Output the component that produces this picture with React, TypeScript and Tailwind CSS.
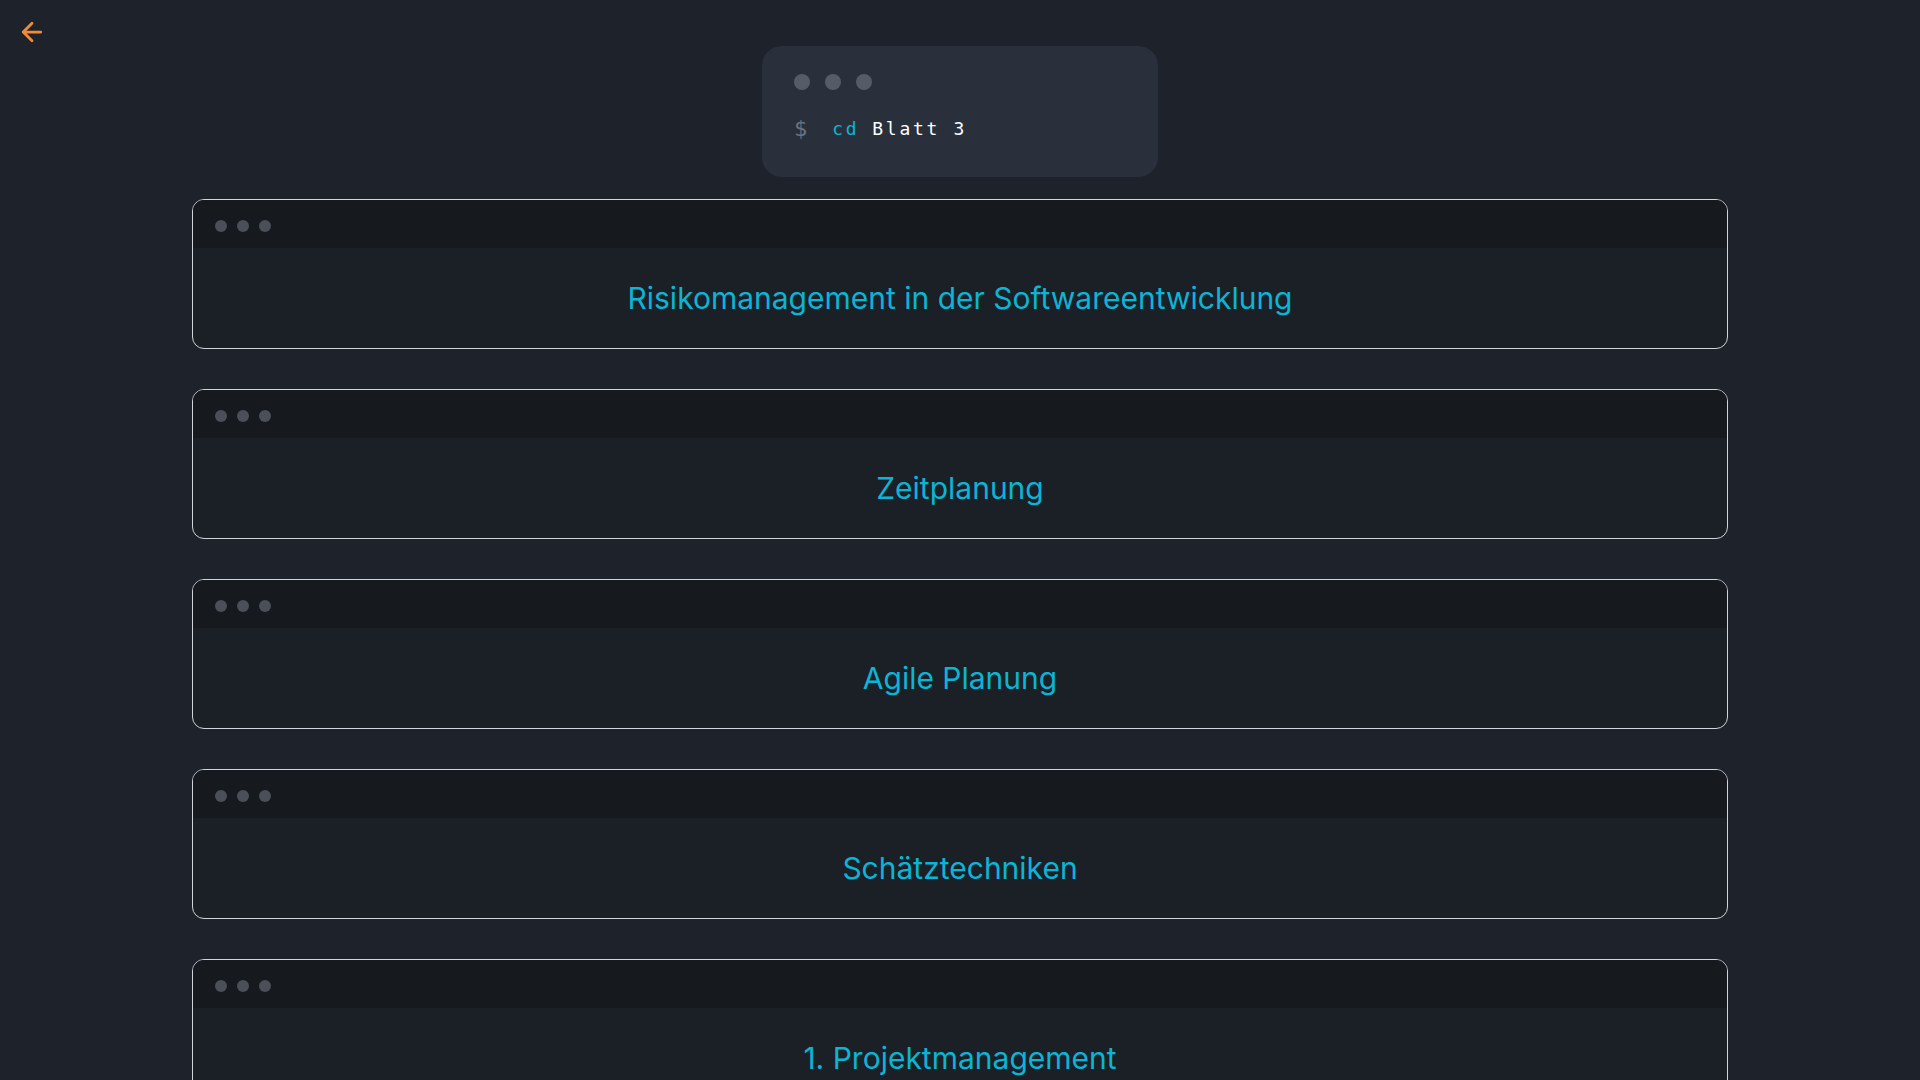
import React from "react";
import { ArrowLeft } from "lucide-react";

const topics = [
  "Risikomanagement in der Softwareentwicklung",
  "Zeitplanung",
  "Agile Planung",
  "Schätztechniken",
  "1. Projektmanagement",
  "2. Anforderungsanalyse",
  "3. Softwarearchitektur",
  "4. Qualitätssicherung",
  "5. Testen",
  "6. Versionsverwaltung",
  "7. Dokumentation",
];

function Dots({ big }: { big?: boolean }) {
  const dot = big
    ? "w-4 h-4 rounded-full bg-[#565c67]"
    : "w-3 h-3 rounded-full bg-[#4a4f58]";
  return (
    <div className={`flex items-center ${big ? "gap-[15px]" : "gap-[10px]"}`}>
      <span className={dot} />
      <span className={dot} />
      <span className={dot} />
    </div>
  );
}

function TopicCard({ title }: { title: string }) {
  return (
    <a
      href="#"
      className="block rounded-xl border border-[#d1d4d9] overflow-hidden bg-[#1b1f26]"
    >
      <div className="h-12 flex items-center pl-[22px] pt-1 bg-[#16191e]">
        <Dots />
      </div>
      <div className="h-[100px] flex items-center justify-center">
        <h2 className="text-[30px] leading-9 text-[#0cb4d5]">{title}</h2>
      </div>
    </a>
  );
}

export default function App() {
  return (
    <div
      className="h-screen overflow-y-auto overflow-x-hidden scheme-dark bg-[#1e232b] [&::-webkit-scrollbar]:w-[15px] [&::-webkit-scrollbar-track]:bg-[#2b2b2b] [&::-webkit-scrollbar-track]:border-l [&::-webkit-scrollbar-track]:border-[#3d3d3d] [&::-webkit-scrollbar-thumb]:bg-[#c3c3c3] [&::-webkit-scrollbar-thumb]:rounded-full [&::-webkit-scrollbar-thumb]:border-y-[5px] [&::-webkit-scrollbar-thumb]:border-l-[4px] [&::-webkit-scrollbar-thumb]:border-r-[3px] [&::-webkit-scrollbar-thumb]:border-solid [&::-webkit-scrollbar-thumb]:border-[#2b2b2b] [&::-webkit-scrollbar-thumb]:bg-clip-padding"
      style={{ fontFamily: "Inter, 'Noto Sans', sans-serif" }}
    >
      <div className="relative w-screen pb-[70px]">
        <button className="absolute left-[17px] top-[17px] text-[#f28b36]">
          <ArrowLeft size={30} strokeWidth={2.2} />
        </button>

        <div className="flex justify-center pt-[46px]">
          <div className="w-[396px] rounded-[20px] bg-[#2a303b] pt-7 pb-[35px] px-8">
            <Dots big />
            <div
              className="mt-6 flex items-center h-7 text-[18px] tracking-[0.15em]"
              style={{ fontFamily: "'DejaVu Sans Mono', monospace" }}
            >
              <span className="text-[22px] text-[#6b7280] tracking-normal">$</span>
              <span className="ml-[25px] text-[#0cb4d5]">cd</span>
              <span className="ml-[13px] text-white">Blatt 3</span>
            </div>
          </div>
        </div>

        <div className="mx-auto mt-[22px] w-[1536px] flex flex-col gap-10">
          {topics.map((t) => (
            <TopicCard key={t} title={t} />
          ))}
        </div>
      </div>
    </div>
  );
}
